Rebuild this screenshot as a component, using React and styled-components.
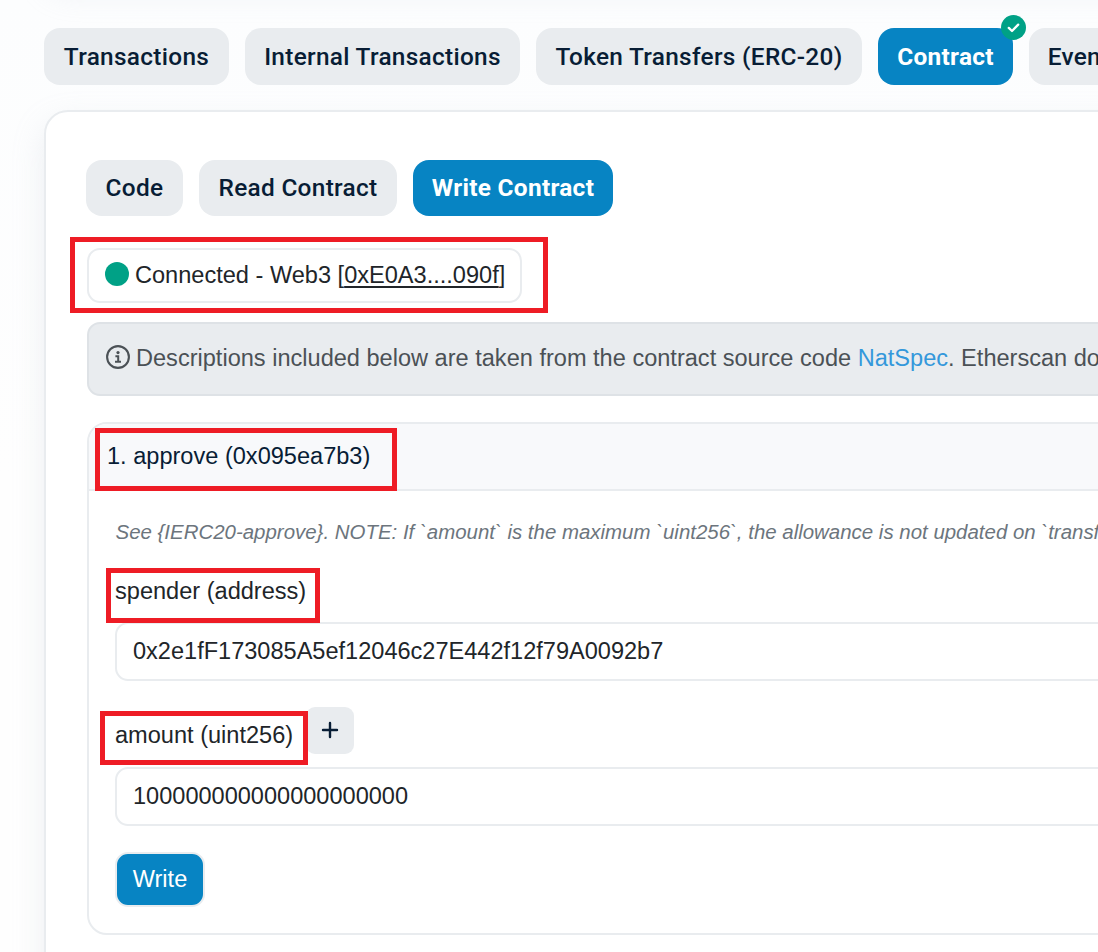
import React from "react";
import styled, { createGlobalStyle } from "styled-components";

const GlobalStyle = createGlobalStyle`
  * { box-sizing: border-box; }
  html, body { margin: 0; padding: 0; }
  body {
    width: 1098px;
    height: 952px;
    overflow: hidden;
    background: #fff;
    color: #212529;
    font-family: "Liberation Sans", Arial, sans-serif;
    font-size: 23.57px;
    line-height: 36px;
  }
`;

const Page = styled.div`
  width: 1098px;
  height: 952px;
  overflow: hidden;
  background: linear-gradient(#fcfdfe, #fefefe 50%);
`;

const PreviousCard = styled.div`
  width: 1400px;
  height: 100px;
  margin: -120px 0 0 44px;
  border-radius: 24px;
  background: #fff;
  box-shadow: 0 13px 31px rgba(189, 197, 209, 0.2);
`;

const TabBar = styled.nav`
  display: flex;
  gap: 16px;
  width: max-content;
  padding: ${(p) => (p.$inner ? "0 0 0 40px" : "48px 0 0 44px")};
`;

const Tab = styled.button`
  position: relative;
  width: ${(p) => p.$width}px;
  height: ${(p) => p.$height || 57}px;
  padding: 0 0 ${(p) => p.$lift || 0}px;
  border: 0;
  border-radius: 16px;
  white-space: nowrap;
  text-align: center;
  font: ${(p) => (p.$active ? 700 : 500)} 24.4px/36px Roboto, sans-serif;
  letter-spacing: 0.3px;
  color: ${(p) => (p.$active ? "#fff" : "#081d35")};
  background: ${(p) => (p.$active ? "#0784c3" : "#e9ecef")};
`;

const VerifiedBadge = styled.svg`
  position: absolute;
  top: -13px;
  right: -13px;
  width: 25px;
  height: 25px;
`;

const Card = styled.main`
  width: 1400px;
  height: 900px;
  margin: 25px 0 0 44px;
  padding: 48px 0 0;
  border: 2px solid #e9ecef;
  border-radius: 24px;
  background: #fff;
  box-shadow: 0 13px 31px rgba(189, 197, 209, 0.25);
`;

const Body = styled.div`
  padding: 32px 0 0 41px;
`;

const Highlight = styled.span`
  position: absolute;
  left: ${(p) => p.$x}px;
  top: ${(p) => p.$y}px;
  width: ${(p) => p.$w}px;
  height: ${(p) => p.$h}px;
  border: 5px solid #ee1c25;
  pointer-events: none;
`;

const Connection = styled.div`
  position: relative;
  display: flex;
  align-items: center;
  width: 435px;
  height: 55px;
  padding: 0 0 2px 16px;
  border: 2px solid #e9ecef;
  border-radius: 13px;
  white-space: pre;
`;

const StatusDot = styled.span`
  width: 24px;
  height: 24px;
  margin: 0 6px 1px 0;
  border-radius: 50%;
  background: #00a186;
`;

const WalletLink = styled.a`
  color: inherit;
  text-decoration: underline;
  text-decoration-thickness: 2px;
  text-underline-offset: 3px;
  text-decoration-skip-ink: none;
`;

const Notice = styled.div`
  display: flex;
  align-items: center;
  height: 74px;
  margin-top: 19px;
  padding: 0 0 2px 17px;
  border: 2px solid #dee2e6;
  border-radius: 13px;
  background: #e9ecef;
  color: #4b5156;
  white-space: pre;
`;

const InfoIcon = styled.svg`
  width: 24px;
  height: 24px;
  margin: 0 6px 2px 0;
`;

const NoticeLink = styled.a`
  color: #3498db;
`;

const MethodCard = styled.section`
  height: 513px;
  margin-top: 26px;
  border: 2px solid #e9ecef;
  border-radius: 20px;
`;

const MethodHeader = styled.header`
  position: relative;
  height: 67px;
  padding: 14px 0 0 18px;
  border-bottom: 2px solid #e9ecef;
  border-radius: 18px 18px 0 0;
  background: #f8f9fb;
  color: #081d35;
`;

const MethodBody = styled.div`
  padding: 25px 0 0 26px;
`;

const Description = styled.p`
  margin: 0;
  padding-left: 0.5px;
  font-size: 20.44px;
  line-height: 32px;
  font-style: italic;
  color: #6c757d;
  white-space: nowrap;
`;

const FieldLabel = styled.label`
  position: relative;
  display: flex;
  align-items: flex-start;
  height: ${(p) => p.$height}px;
  margin-top: ${(p) => p.$gap}px;
  padding-top: ${(p) => p.$inset || 0}px;
`;

const LabelText = styled.span`
  width: ${(p) => p.$width || "auto"};
  white-space: nowrap;
`;

const AddButton = styled.button`
  display: flex;
  align-items: center;
  justify-content: center;
  width: 48px;
  height: 47px;
  margin-top: -10px;
  padding: 0 0 2px 0;
  border: 0;
  border-radius: 9px;
  background: #e9ecef;
`;

const Field = styled.input`
  display: block;
  width: 1240px;
  height: 59px;
  padding: 0 0 0 16px;
  border: 2px solid #e9ecef;
  border-radius: 13px;
  outline: 0;
  background: #fff;
  color: #212529;
  font: 23.56px "Liberation Sans", Arial, sans-serif;
`;

const WriteButton = styled.button`
  width: 90px;
  height: 55px;
  margin-top: 26px;
  padding: 0;
  border: 2px solid #e9ecef;
  border-radius: 13px;
  background: #0784c3;
  color: #fff;
  font: 23.56px "Liberation Sans", Arial, sans-serif;
`;

export default function App() {
  return (
    <Page>
      <GlobalStyle />
      <PreviousCard />
      <TabBar>
        <Tab $width={185}>Transactions</Tab>
        <Tab $width={275}>Internal Transactions</Tab>
        <Tab $width={326}>Token Transfers (ERC-20)</Tab>
        <Tab $width={135} $active>
          Contract
          <VerifiedBadge viewBox="0 0 25 25">
            <circle cx="12.5" cy="12.5" r="12.5" fill="#00a186" />
            <path d="M7.8 12.9l3.2 3.1 6.2-6.4" fill="none" stroke="#fff" strokeWidth="2.3" strokeLinecap="round" strokeLinejoin="round" />
          </VerifiedBadge>
        </Tab>
        <Tab $width={112}>Events</Tab>
      </TabBar>
      <Card>
        <TabBar $inner>
          <Tab $width={97} $height={56} $lift={1}>Code</Tab>
          <Tab $width={198} $height={56} $lift={1}>Read Contract</Tab>
          <Tab $width={200} $height={56} $lift={1} $active>Write Contract</Tab>
        </TabBar>
        <Body>
          <Connection>
            <StatusDot />
            <span>
              Connected - Web3 [<WalletLink>0xE0A3....090f</WalletLink>]
            </span>
            <Highlight $x={-19} $y={-13} $w={478} $h={76} />
          </Connection>
          <Notice>
            <InfoIcon viewBox="0 0 24 24" fill="none" stroke="#4b5156">
              <circle cx="12" cy="12" r="10.9" strokeWidth="2.1" />
              <circle cx="12" cy="7.6" r="1.6" fill="#4b5156" stroke="none" />
              <path d="M9.4 11.3h2.8v5.3M9 16.8h6" strokeWidth="2" />
            </InfoIcon>
            <span>
              Descriptions included below are taken from the contract source code{" "}
              <NoticeLink>NatSpec</NoticeLink>. Etherscan does not provide
            </span>
          </Notice>
          <MethodCard>
            <MethodHeader>
              1. approve (0x095ea7b3)
              <Highlight $x={6} $y={4} $w={302} $h={63} />
            </MethodHeader>
            <MethodBody>
              <Description>
                See {"{IERC20-approve}"}. NOTE: If `amount` is the maximum `uint256`, the allowance is not updated on `transferFrom`.
              </Description>
              <FieldLabel $height={49} $gap={25}>
                <LabelText>spender (address)</LabelText>
                <Highlight $x={-9} $y={-5} $w={214} $h={55} />
              </FieldLabel>
              <Field readOnly value="0x2e1fF173085A5ef12046c27E442f12f79A0092b7" />
              <FieldLabel $height={60} $gap={26} $inset={10}>
                <LabelText $width="191px">amount (uint256)</LabelText>
                <AddButton type="button">
                  <svg width="18" height="18" viewBox="0 0 18 18">
                    <path d="M9 2v14M2 9h14" stroke="#081d35" strokeWidth="2.4" strokeLinecap="round" />
                  </svg>
                </AddButton>
                <Highlight $x={-15} $y={4} $w={208} $h={54} />
              </FieldLabel>
              <Field readOnly value="100000000000000000000" />
              <WriteButton type="button">Write</WriteButton>
            </MethodBody>
          </MethodCard>
        </Body>
      </Card>
    </Page>
  );
}
